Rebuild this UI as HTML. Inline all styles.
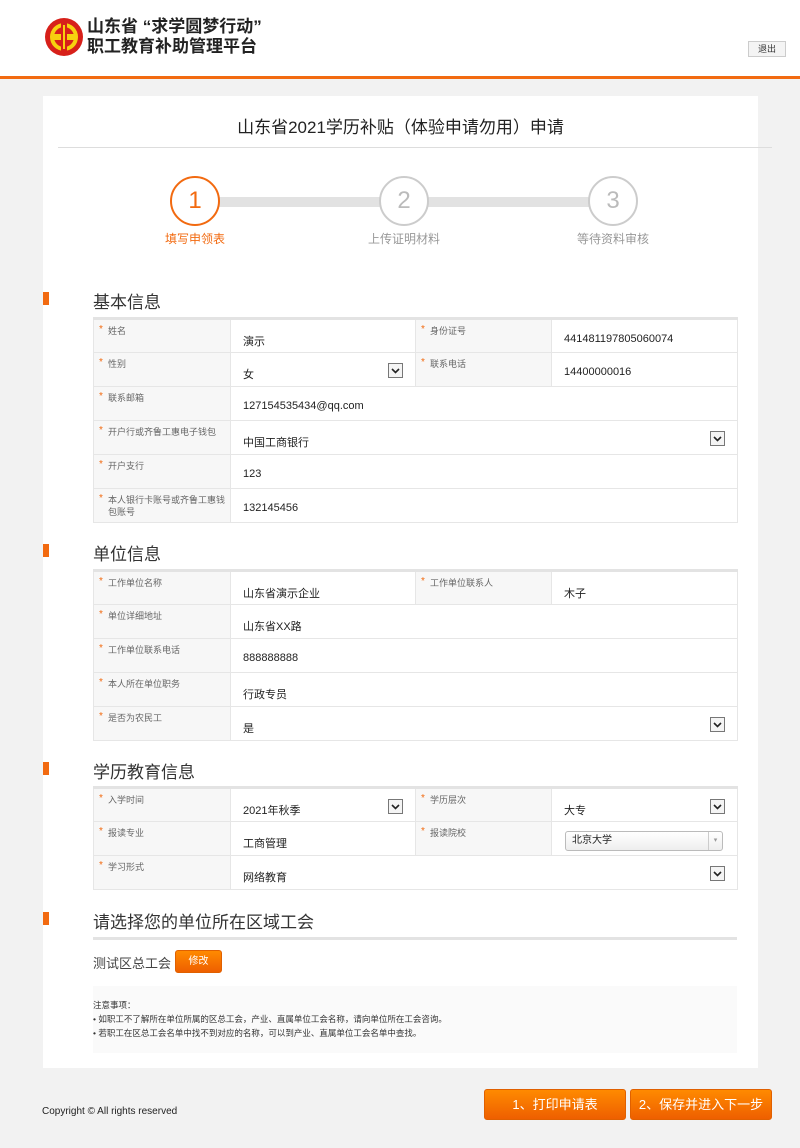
<!DOCTYPE html>
<html><head><meta charset="utf-8"><style>
*{margin:0;padding:0;box-sizing:border-box}
body{width:800px;height:1148px;background:#f2f2f2;font-family:"Liberation Sans","Noto Sans CJK SC",sans-serif;color:#333;position:relative;overflow:hidden}
.abs{position:absolute}
.hdr{left:0;top:0;width:800px;height:79px;background:#fff;border-bottom:3px solid #f26a10}
.panel{left:43px;top:96px;width:715px;height:972px;background:#fff}
.sec{font-size:17px;color:#333;left:93px}
.bar{left:43px;width:6px;height:13px;background:#f26a10}
table{position:absolute;left:93px;width:644px;border-collapse:collapse;border-top:3px solid #e3e3e3;table-layout:fixed}
td{border:1px solid #e6e6e6;height:34px;font-size:11px;vertical-align:top}
td.l{background:#f7f7f7;color:#666;font-size:9px;padding:5px 4px 0 14px;position:relative;line-height:12px}
td.l.r:before{content:"*";color:#f26a10;position:absolute;left:5px;top:4px;font-size:10px}
td.v{padding:13px 12px 0;color:#222}
.sel{float:right;width:15px;height:15px;border:1px solid #777;background:#f4f4f4;margin-top:-3px}
.sel svg{display:block}
.step{width:50px;height:50px;border-radius:50%;border:2px solid #ccc;background:#fff;color:#bbb;font-size:24px;text-align:center;line-height:46px}
.btn{background:linear-gradient(#ff8a00,#ee5f00);color:#fff;border-radius:3px;text-align:center;font-size:13px;border:1px solid #e06000}
</style></head><body>
<div class="abs hdr"></div>
<svg class="abs" style="left:44px;top:17px" width="40" height="40" viewBox="0 0 40 40"><circle cx="20" cy="20" r="19" fill="#d7201a"/><circle cx="20" cy="20" r="14" fill="#f7d10f"/><circle cx="20" cy="20" r="10" fill="#d7201a"/><rect x="8" y="17" width="24" height="6" fill="#f7d10f"/><rect x="17" y="6" width="6" height="28" fill="#d7201a"/><rect x="19" y="8" width="2" height="24" fill="#f7d10f"/></svg>
<div class="abs" style="left:87px;top:17px;font-size:17px;font-weight:bold;line-height:20px;color:#222">山东省 “求学圆梦行动”<br>职工教育补助管理平台</div>
<div class="abs" style="left:748px;top:41px;width:38px;height:16px;border:1px solid #ccc;background:#f4f4f4;font-size:9px;text-align:center;line-height:14px">退出</div>
<div class="abs panel"></div>
<div class="abs" style="left:43px;top:113px;width:715px;text-align:center;font-size:17px;color:#222">山东省2021学历补贴（体验申请勿用）申请</div>
<div class="abs" style="left:58px;top:147px;width:714px;height:1px;background:#ddd"></div>
<div class="abs" style="left:200px;top:197px;width:410px;height:10px;background:#e2e2e2"></div>
<div class="abs step" style="left:170px;top:176px;border-color:#f26a10;color:#f26a10">1</div>
<div class="abs step" style="left:379px;top:176px">2</div>
<div class="abs step" style="left:588px;top:176px">3</div>
<div class="abs" style="left:145px;top:230px;width:100px;text-align:center;font-size:12px;color:#f26a10">填写申领表</div>
<div class="abs" style="left:354px;top:230px;width:100px;text-align:center;font-size:12px;color:#999">上传证明材料</div>
<div class="abs" style="left:563px;top:230px;width:100px;text-align:center;font-size:12px;color:#999">等待资料审核</div>

<div class="abs bar" style="top:292px"></div><div class="abs sec" style="top:288px">基本信息</div>
<table style="top:317px"><colgroup><col style="width:137px"><col style="width:185px"><col style="width:136px"><col style="width:186px"></colgroup>
<tr><td class="l r">姓名</td><td class="v">演示</td><td class="l r">身份证号</td><td class="v">441481197805060074</td></tr>
<tr><td class="l r">性别</td><td class="v">女<span class="sel"><svg width="13" height="13"><path d="M3 5l3.5 3.5L10 5" stroke="#222" stroke-width="1.6" fill="none"/></svg></span></td><td class="l r">联系电话</td><td class="v">14400000016</td></tr>
<tr><td class="l r">联系邮箱</td><td class="v" colspan="3">127154535434@qq.com</td></tr>
<tr><td class="l r">开户行或齐鲁工惠电子钱包</td><td class="v" colspan="3">中国工商银行<span class="sel"><svg width="13" height="13"><path d="M3 5l3.5 3.5L10 5" stroke="#222" stroke-width="1.6" fill="none"/></svg></span></td></tr>
<tr><td class="l r">开户支行</td><td class="v" colspan="3">123</td></tr>
<tr><td class="l r">本人银行卡账号或齐鲁工惠钱包账号</td><td class="v" colspan="3">132145456</td></tr>
</table>

<div class="abs bar" style="top:544px"></div><div class="abs sec" style="top:540px">单位信息</div>
<table style="top:569px"><colgroup><col style="width:137px"><col style="width:185px"><col style="width:136px"><col style="width:186px"></colgroup>
<tr><td class="l r">工作单位名称</td><td class="v">山东省演示企业</td><td class="l r">工作单位联系人</td><td class="v">木子</td></tr>
<tr><td class="l r">单位详细地址</td><td class="v" colspan="3">山东省XX路</td></tr>
<tr><td class="l r">工作单位联系电话</td><td class="v" colspan="3">888888888</td></tr>
<tr><td class="l r">本人所在单位职务</td><td class="v" colspan="3">行政专员</td></tr>
<tr><td class="l r">是否为农民工</td><td class="v" colspan="3">是<span class="sel"><svg width="13" height="13"><path d="M3 5l3.5 3.5L10 5" stroke="#222" stroke-width="1.6" fill="none"/></svg></span></td></tr>
</table>

<div class="abs bar" style="top:762px"></div><div class="abs sec" style="top:758px">学历教育信息</div>
<table style="top:786px"><colgroup><col style="width:137px"><col style="width:185px"><col style="width:136px"><col style="width:186px"></colgroup>
<tr><td class="l r">入学时间</td><td class="v">2021年秋季<span class="sel"><svg width="13" height="13"><path d="M3 5l3.5 3.5L10 5" stroke="#222" stroke-width="1.6" fill="none"/></svg></span></td><td class="l r">学历层次</td><td class="v">大专<span class="sel"><svg width="13" height="13"><path d="M3 5l3.5 3.5L10 5" stroke="#222" stroke-width="1.6" fill="none"/></svg></span></td></tr>
<tr><td class="l r">报读专业</td><td class="v">工商管理</td><td class="l r">报读院校</td><td class="v" style="padding:9px 14px 0 13px"><div style="border:1px solid #bbb;border-radius:3px;height:20px;font-size:10px;line-height:18px;padding-left:6px;background:linear-gradient(#fff,#eee)">北京大学<span style="float:right;width:14px;border-left:1px solid #ccc;text-align:center;color:#999;font-size:7px">▾</span></div></td></tr>
<tr><td class="l r">学习形式</td><td class="v" colspan="3">网络教育<span class="sel"><svg width="13" height="13"><path d="M3 5l3.5 3.5L10 5" stroke="#222" stroke-width="1.6" fill="none"/></svg></span></td></tr>
</table>

<div class="abs bar" style="top:912px"></div><div class="abs sec" style="top:908px">请选择您的单位所在区域工会</div>
<div class="abs" style="left:93px;top:937px;width:644px;height:3px;background:#e3e3e3"></div>
<div class="abs" style="left:93px;top:953px;font-size:13px;color:#444">测试区总工会</div>
<div class="abs btn" style="left:175px;top:950px;width:47px;height:23px;font-size:10px;line-height:21px">修改</div>
<div class="abs" style="left:93px;top:986px;width:644px;height:67px;background:#fafafa;font-size:8.5px;color:#333;line-height:14px;padding-top:12px">注意事项：<br>• 如职工不了解所在单位所属的区总工会，产业、直属单位工会名称，请向单位所在工会咨询。<br>• 若职工在区总工会名单中找不到对应的名称，可以到产业、直属单位工会名单中查找。</div>

<div class="abs" style="left:42px;top:1106px;font-size:10px;color:#222">Copyright © All rights reserved</div>
<div class="abs btn" style="left:484px;top:1089px;width:142px;height:31px;line-height:29px">1、打印申请表</div>
<div class="abs btn" style="left:630px;top:1089px;width:142px;height:31px;line-height:29px">2、保存并进入下一步</div>
</body></html>
